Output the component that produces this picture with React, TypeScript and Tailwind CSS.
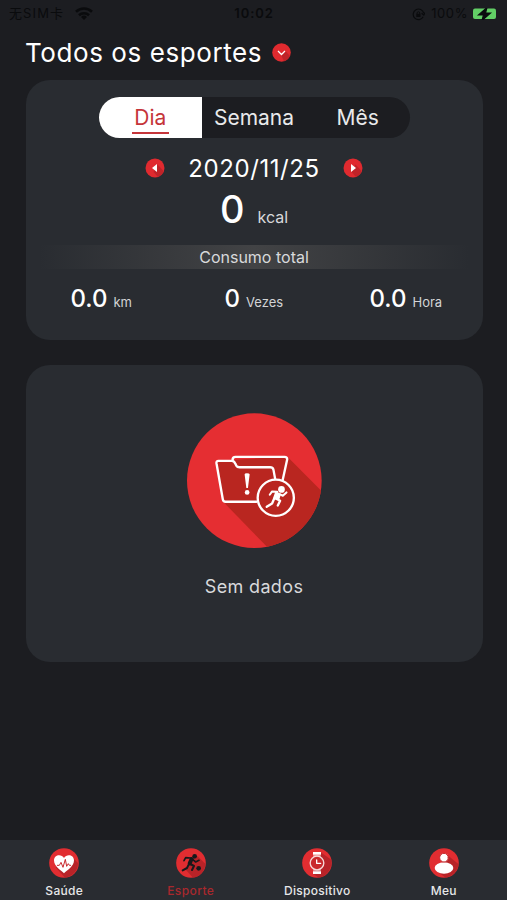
import { useState } from 'react'
import type { ReactNode } from 'react'

const periods = [
  { label: 'Dia', cls: 'tracking-[0px]' },
  { label: 'Semana', cls: 'tracking-[0px]' },
  { label: 'Mês', cls: 'tracking-[0px]' },
]

function StatusBar() {
  return (
    <div className="h-7 flex items-center justify-between pl-[9px] pr-[10px] text-[13px] text-[#0a0b0d]">
      <div className="w-40 flex items-center gap-[6px]">
        <span className="w-[60px] whitespace-nowrap tracking-[1.1px]">无SIM卡</span>
        <svg width="18" height="13" viewBox="0 0 18 13" fill="none" stroke="currentColor" strokeWidth="2.6" className="-mt-[2px]">
          <path d="M1 4.800a11.400 11.400 0 0 1 16 0" />
          <path d="M4 8.200a7.200 7.200 0 0 1 10 0" />
          <path d="M9 13 6 10a4.300 4.300 0 0 1 6 0z" fill="currentColor" stroke="none" />
        </svg>
      </div>
      <span className="pl-[2px] font-semibold tracking-[0.9px]">10:02</span>
      <div className="w-40 flex items-center justify-end">
        <svg width="13" height="13" viewBox="0 0 13 13" fill="none" stroke="currentColor" strokeWidth="1.2" className="mr-[6px]">
          <path d="M11.2 8.8a5.3 5.3 0 1 1 .5-3.6" />
          <path d="m9.6 5.2 2.2 1.8 1.2-2.4" />
          <rect x="4.3" y="5.8" width="4.2" height="3.2" fill="currentColor" stroke="none" />
          <path d="M5.1 6V5a1.3 1.3 0 0 1 2.6 0v1" strokeWidth=".9" />
        </svg>
        <span className="tracking-[0.6px] mr-[4px]">100%</span>
        <svg width="25" height="12" viewBox="0 0 25 12">
          <rect x="1" y=".5" width="23" height="10.500" rx="2" fill="#62cf66" />
          <path d="M15-.5 6.500 7h5L10 12.500 18.500 5h-5z" fill="#0b0d0f" stroke="#0b0d0f" strokeWidth="1.2" />
        </svg>
      </div>
    </div>
  )
}

function ArrowDot({ left }: { left?: boolean }) {
  return (
    <svg width="20" height="20" viewBox="0 0 20 20">
      <circle cx="10" cy="10" r="9.5" fill="#e02a2f" />
      <path d="M12.500 6.500 18.500 13A9.500 9.500 0 0 1 13 19L8.500 14z" fill="#a81f24" opacity=".6" />
      {left ? <path d="M12 6v8l-5-4z" fill="#fff" /> : <path d="M8 6v8l5-4z" fill="#fff" />}
    </svg>
  )
}

function Stat({ value, unit, className }: { value: string; unit: string; className: string }) {
  return (
    <div className={`flex items-baseline whitespace-nowrap ${className}`}>
      <span className="text-[24px] leading-8 font-medium text-white">{value}</span>
      <span className="ml-[6px] text-[13px] text-[#d3d4d6]">{unit}</span>
    </div>
  )
}

function EmptyIcon() {
  return (
    <svg width="135" height="135" viewBox="21 25 403 403" fill="none" strokeLinecap="round" strokeLinejoin="round">
      <defs>
        <clipPath id="disc">
          <circle cx="222" cy="227" r="201" />
        </clipPath>
      </defs>
      <circle cx="222" cy="227" r="201" fill="#e52e32" />
      <g clipPath="url(#disc)">
        <path d="M110 168 155 165 320 155 440 275 440 440 275 440 130 291z" fill="#b92620" />
      </g>
      <path d="M157 165Q157 156 166 156H312Q321 156 320 164L306 228" stroke="#fff" strokeWidth="7" />
      <path
        d="M228 290H136Q129 290 128 283L109 175Q108 168 115 168H154Q162 168 165 176L168 182Q171 187 178 187H269Q277 187 279 194L284 221"
        stroke="#fff"
        strokeWidth="7"
      />
      <path d="M193 208Q193 205 200 205T208 208L203 249H198z" fill="#fff" />
      <circle cx="200.500" cy="262" r="7" fill="#fff" />
      <circle cx="286" cy="278" r="54" fill="#b92620" stroke="#fff" strokeWidth="7" />
      <circle cx="303" cy="253" r="10" fill="#fff" />
      <path d="M287 262 281 279 294 282 298 268z" fill="#fff" stroke="#fff" strokeWidth="6" />
      <path d="M290 260 275 259 268 269" stroke="#fff" strokeWidth="6" />
      <path d="M299 268 307 272 318 262" stroke="#fff" strokeWidth="6" />
      <path d="M286 280 299 287 292 301" stroke="#fff" strokeWidth="7" />
      <path d="M281 281 275 295 259 305" stroke="#fff" strokeWidth="7" />
    </svg>
  )
}

function TabDisc({ children, shade }: { children: ReactNode; shade: string }) {
  return (
    <svg width="30" height="30" viewBox="0 0 90 90" fill="none" strokeLinecap="round" strokeLinejoin="round">
      <circle cx="45" cy="45" r="44.500" fill="#e12d31" />
      <path d={shade} fill="#a92026" opacity=".75" />
      {children}
    </svg>
  )
}

const tabs = [
  {
    label: 'Saúde',
    labelCls: 'text-[#e6e7e8] tracking-[0.3px]',
    shade: 'M70 28 87 45A44 44 0 0 1 48 89L20 58z',
    icon: (
      <>
        <path d="M45 76C36 67 15 56 15 37C15 20 37 16 45 30C53 16 75 20 75 37C75 56 54 67 45 76z" fill="#fff" />
        <path d="M25 52h6l5-9 6 15 7-24 4 21 5-8 3 5h4" stroke="#c8282d" strokeWidth="3" />
      </>
    ),
  },
  {
    label: 'Esporte',
    labelCls: 'text-[#a9282d] tracking-[0.4px]',
    shade: 'M64 24 88 47A44 44 0 0 1 51 89L30 66z',
    icon: (
      <g stroke="#17181b">
        <circle cx="56" cy="25" r="7" fill="#17181b" stroke="none" />
        <path d="M47 33 41 46" strokeWidth="12" />
        <path d="M44 30 29 29 24 38" strokeWidth="5" />
        <path d="M51 35 59 42 69 37" strokeWidth="5" />
        <path d="M43 48 54 54 48 66" strokeWidth="6" />
        <path d="M38 50 33 60 20 67" strokeWidth="6" />
        <circle cx="68" cy="61" r="7" fill="#17181b" stroke="none" />
      </g>
    ),
  },
  {
    label: 'Dispositivo',
    labelCls: 'text-[#e6e7e8] tracking-[0.3px]',
    shade: 'M58 14 86 34A44 44 0 0 1 51 89L32 77z',
    icon: (
      <>
        <path d="M33 12H57V20H33zM33 70H57V78H33z" fill="#fff" />
        <path d="M35 24H55M35 66H55" stroke="#fff" strokeWidth="3" />
        <circle cx="45" cy="45" r="20.500" fill="#c9292d" stroke="#f6d9d9" strokeWidth="4" />
        <path d="M44 36V46H56" stroke="#fff" strokeWidth="4" />
      </>
    ),
  },
  {
    label: 'Meu',
    labelCls: 'text-[#e6e7e8] tracking-[0.3px]',
    shade: 'M54 20 88 48A44 44 0 0 1 50 89L22 68z',
    icon: (
      <>
        <ellipse cx="45" cy="60" rx="28" ry="17" fill="#fff" />
        <circle cx="45" cy="29" r="13" fill="#fff" stroke="#c9292d" strokeWidth="3" />
      </>
    ),
  },
]

export default function App() {
  const [period, setPeriod] = useState(0)

  return (
    <div className="w-[507px] h-[900px] overflow-hidden flex flex-col bg-[#1c1d21] font-[Inter,'Noto_Sans_CJK_SC',sans-serif]">
      <StatusBar />

      <div className="h-[52px] pl-[25px] pb-[3px] flex items-center">
        <h1 className="w-[239px] text-[26px] leading-[48px] whitespace-nowrap text-white tracking-[0.58px]">Todos os esportes</h1>
        <svg width="19" height="19" viewBox="0 0 19 19" className="ml-[8px]" fill="none">
          <circle cx="9.500" cy="9.500" r="9.300" fill="#e02a2f" />
          <path d="m13.500 8 4.500 5a9.300 9.300 0 0 1-6 5.300l-3-6.500z" fill="#a81f24" opacity=".6" />
          <path d="m6 8 3.500 3.500L13 8" stroke="#fff" strokeWidth="1.300" />
        </svg>
      </div>

      {/* Summary card */}
      <div className="ml-[25.5px] mr-[24.5px] h-[260px] rounded-[24px] bg-[#292c31] pt-[17px] flex flex-col items-center">
        <div className="w-[311px] h-[41px] rounded-full overflow-hidden bg-[#1c1d21] flex">
          {periods.map((p, i) => (
            <button
              key={p.label}
              onClick={() => setPeriod(i)}
              className={`flex-1 flex flex-col items-center pt-[6px] text-[21px] leading-[29px] ${p.cls} ${
                period === i ? 'bg-white text-[#c5353a]' : 'text-[#e9eaeb]'
              }`}
            >
              {p.label}
              {period === i && <span className="w-[37px] h-[2px] bg-[#c5353a]" />}
            </button>
          ))}
        </div>

        <div className="mt-[14px] h-8 w-[219px] flex items-center justify-between text-white">
          <ArrowDot left />
          <span className="text-[24px] leading-8 pt-px tracking-[0.6px]">2020/11/25</span>
          <ArrowDot />
        </div>

        <div className="h-[61px] flex items-baseline whitespace-nowrap">
          <span className="text-[38px] leading-[51px] font-medium text-white">0</span>
          <span className="ml-[13px] text-[16px] text-[#d8d9db]">kcal</span>
        </div>

        <div className="w-[430px] h-6 shrink-0 bg-gradient-to-r from-transparent via-[#424345] to-transparent text-center text-[16px] leading-[25px] text-[#d8d9db]">
          Consumo total
        </div>

        <div className="mt-[14px] w-full flex">
          <Stat value="0.0" unit="km" className="w-[152px] pl-[45px]" />
          <Stat value="0" unit="Vezes" className="w-[152px] pl-[47px]" />
          <Stat value="0.0" unit="Hora" className="flex-1 pl-[40px]" />
        </div>
      </div>

      {/* Empty state */}
      <div className="ml-[25.5px] mr-[24.5px] mt-[25px] h-[297px] rounded-[24px] bg-[#292c31] pt-[48px] flex flex-col items-center">
        <EmptyIcon />
        <p className="mt-[25px] text-[18px] leading-[28px] tracking-[0.35px] text-[#d8d9db]">Sem dados</p>
      </div>

      <div className="mt-auto h-[60px] pl-px bg-[#292c31] grid grid-cols-4">
        {tabs.map(t => (
          <div key={t.label} className="flex flex-col items-center pt-[8px]">
            <TabDisc shade={t.shade}>{t.icon}</TabDisc>
            <span className={`mt-[5px] text-[12px] leading-4 font-medium ${t.labelCls}`}>{t.label}</span>
          </div>
        ))}
      </div>
    </div>
  )
}
